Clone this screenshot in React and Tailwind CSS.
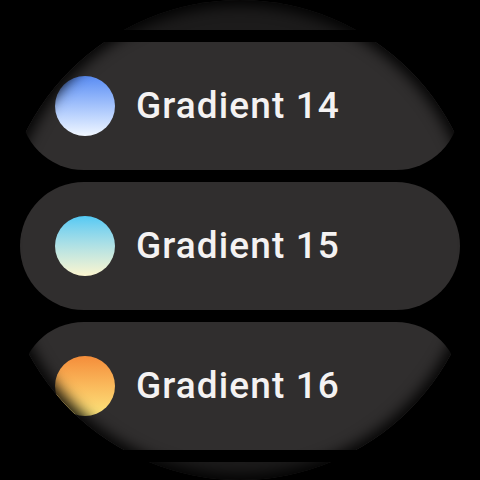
import React from 'react'

const items = [
  { label: 'Gradient 13', grad: 'bg-gradient-to-b from-[#3b3f8f] to-[#8aa0e8]', dim: true },
  { label: 'Gradient 14', grad: 'bg-gradient-to-b from-[#5a8cf3] to-[#f1f7ff]' },
  { label: 'Gradient 15', grad: 'bg-gradient-to-b from-[#52c9f4] to-[#fcf6cf]' },
  { label: 'Gradient 16', grad: 'bg-gradient-to-b from-[#f48d3a] to-[#fbe57c]' },
  { label: 'Gradient 17', grad: 'bg-gradient-to-b from-[#e05a7a] to-[#f8c6a0]', dim: true },
]

function Chip({ item }){
  if(item.dim){
    return <div className="h-[128px] w-[440px] shrink-0 rounded-full bg-[#1c1b1b]" />
  }
  return (
    <div className="h-[128px] w-[440px] shrink-0 rounded-full bg-[#302e2e] flex items-center pl-[35px]">
      <div className={'w-[60px] h-[60px] rounded-full shrink-0 ' + item.grad} />
      <span className="ml-[21px] text-[37px] font-medium text-[#f4f2f2] tracking-[1.1px]" style={{ fontFamily: 'Roboto, "Noto Sans", sans-serif' }}>
        {item.label}
      </span>
    </div>
  )
}

export default function App(){
  return (
    <div className="w-[480px] h-[480px] bg-black">
      <div className="relative w-[480px] h-[480px] rounded-full overflow-hidden bg-black">
        <div className="flex flex-col items-center gap-[12px] mt-[-98px]">
          {items.map(it => <Chip key={it.label} item={it} />)}
        </div>
        <div className="absolute inset-0 rounded-full pointer-events-none shadow-[inset_0_0_14px_6px_rgba(0,0,0,0.9)]" />
      </div>
    </div>
  )
}
